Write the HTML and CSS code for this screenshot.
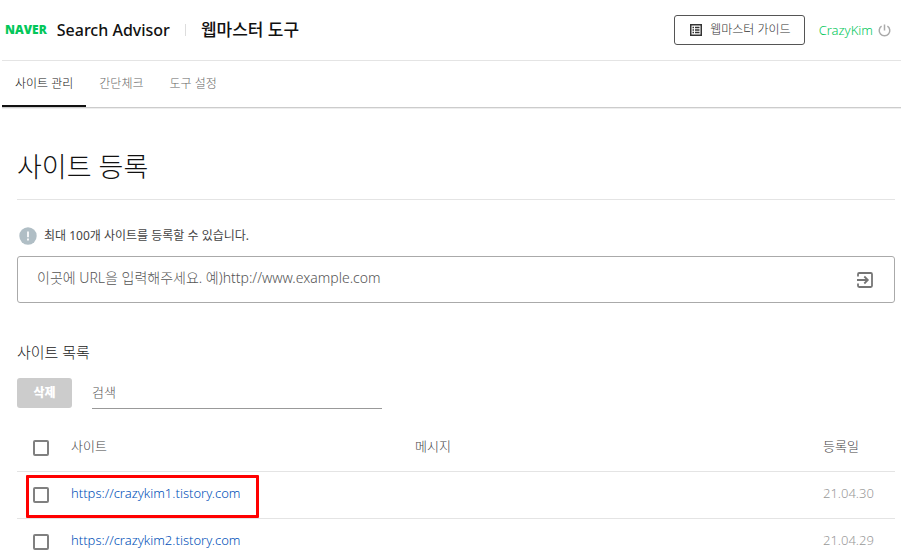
FILE: index.html
```html
<!DOCTYPE html>
<html lang="ko">
<head>
<meta charset="utf-8">
<meta name="viewport" content="width=device-width, initial-scale=1">
<title>Search Advisor</title>
<link rel="stylesheet" href="styles.css">
</head>
<body>
<div class="page">
  <header class="header">
    <a class="naver" href="#">NAVER</a>
    <a class="brand" href="#">Search Advisor</a>
    <span class="divider"></span>
    <a class="tool" href="#">웹마스터 도구</a>
    <button class="guide" type="button">
      <svg class="guide-icon" viewBox="0 0 12 12" aria-hidden="true"><rect x=".75" y=".75" width="10.5" height="10.5" fill="none" stroke="#333" stroke-width="1.5"/><path d="M2.5 3.5H4M5 3.5h4.5M2.5 6H4M5 6h4.5M2.5 8.5H4M5 8.5h4.5" stroke="#333" stroke-width="1.3"/></svg>
      웹마스터 가이드
    </button>
    <a class="user" href="#">CrazyKim</a>
    <button class="power" type="button" aria-label="로그아웃">
      <svg viewBox="0 0 13 13"><path d="M6.5 .5v6M3.6 2.1a5.3 5.3 0 1 0 5.8 0" fill="none" stroke="#aaa" stroke-width="1.5"/></svg>
    </button>
  </header>
  <nav class="tabs">
    <a class="tab active" href="#">사이트 관리</a>
    <a class="tab" href="#">간단체크</a>
    <a class="tab" href="#">도구 설정</a>
  </nav>
  <main class="main">
    <h1>사이트 등록</h1>
    <p class="notice">
      <svg class="notice-icon" viewBox="0 0 18 18" aria-hidden="true"><circle cx="9" cy="9" r="8.7" fill="#b0bec5"/><path d="M9 4.5v5.7M9 11.5v2" stroke="#fff" stroke-width="1.7"/></svg>
      최대 100개 사이트를 등록할 수 있습니다.
    </p>
    <form class="url-box">
      <input class="url" type="text" aria-label="사이트 URL" placeholder="이곳에 URL을 입력해주세요. 예)http://www.example.com">
      <button class="enter" type="submit" aria-label="등록">
        <svg viewBox="0 0 16 16"><path d="M1 4.5V2.2Q1 1 2.2 1h11.6Q15 1 15 2.2v11.6q0 1.2-1.2 1.2H2.2Q1 15 1 13.8V11.5M0 8h10.5M7.3 4.5 10.8 8l-3.5 3.5" fill="none" stroke="#757575" stroke-width="1.8"/></svg>
      </button>
    </form>
    <h2>사이트 목록</h2>
    <div class="actions">
      <button class="delete" type="button" disabled>삭제</button>
      <input class="search" type="text" aria-label="검색" placeholder="검색">
    </div>
    <table class="sites">
      <thead>
        <tr><th class="check"><input type="checkbox" aria-label="전체 선택"></th><th class="site">사이트</th><th>메시지</th><th class="date">등록일</th></tr>
      </thead>
      <tbody>
        <tr class="marked"><td class="check"><input type="checkbox" aria-label="crazykim1 선택"></td><td><a href="#">https://crazykim1.tistory.com</a></td><td></td><td class="date">21.04.30</td></tr>
        <tr><td class="check"><input type="checkbox" aria-label="crazykim2 선택"></td><td><a href="#">https://crazykim2.tistory.com</a></td><td></td><td class="date">21.04.29</td></tr>
      </tbody>
    </table>
  </main>
</div>
</body>
</html>
```
FILE: styles.css
```css
*, *::after { box-sizing: border-box; }
body {
  margin: 0;
  background: #fff;
  color: #333;
  font: 300 12px/18px "Noto Sans", "Noto Sans CJK KR", sans-serif;
}
a { color: inherit; text-decoration: none; }
button, input { font: inherit; color: inherit; margin: 0; }
button { padding: 0; border: 0; background: none; }
svg { display: block; }
.page { max-height: 100vh; overflow: hidden; padding-left: 2px; }

.header {
  display: flex;
  align-items: center;
  height: 61px;
  padding: 0 10px 0 3px;
  border-bottom: 1px solid #e4e4e4;
}
.naver { font: 800 12px/18px "Open Sans", sans-serif; color: #03c75a; margin-right: 10px; }
.brand { font-size: 16px; font-weight: 500; color: #111; }
.divider { width: 1px; height: 12px; margin: 0 15px; background: #ddd; }
.tool { font-size: 17px; font-weight: 500; color: #111; }
.guide {
  display: flex;
  align-items: center;
  gap: 8px;
  height: 30px;
  margin-left: auto;
  padding: 0 13px 0 15px;
  border: 1px solid #555;
  border-radius: 3px;
}
.guide-icon { width: 12px; height: 12px; }
.user { margin-left: 14px; font-size: 13px; line-height: 20px; font-weight: 300; color: #03c75a; }
.power { width: 13px; height: 13px; margin-left: 5px; }

.tabs {
  display: flex;
  height: 47px;
  border-bottom: 1px solid #ccc;
  box-shadow: 0 1px 0 #eee;
}
.tab { padding: 14px 13px; line-height: 18px; color: #666; }
.tab.active { color: #111; border-bottom: 2px solid #111; }

.main { padding: 41px 6px 0 15px; }
h1 {
  margin: 0;
  padding-bottom: 14px;
  border-bottom: 1px solid #e4e4e4;
  font-size: 27px;
  line-height: 36px;
  font-weight: 300;
  color: #111;
}
.notice { display: flex; align-items: center; gap: 7px; margin: 27px 0 11px 2px; font-weight: 400; color: #444; }
.notice-icon { width: 18px; height: 18px; }
.url-box {
  display: flex;
  align-items: center;
  height: 47px;
  padding: 0 21px 0 19px;
  border: 1px solid #aaa;
  border-radius: 3px;
}
.url { flex: 1; border: 0; padding: 0 0 4px; outline: 0; font-size: 14px; }
.enter { width: 16px; height: 16px; }
::placeholder { color: #555; opacity: 1; }
h2 { margin: 39px 0 16px; font-size: 15px; line-height: 20px; font-weight: 300; color: #222; }
.actions { display: flex; align-items: flex-start; gap: 20px; }
.delete { width: 55px; height: 30px; border-radius: 3px; background: #ccc; color: #fff; font-weight: 900; }
.search { width: 33%; height: 31px; padding: 0 0 2px; border: 0; border-bottom: 1px solid #999; outline: 0; font-size: 13px; }

.sites { width: 100%; margin-top: 16px; border-collapse: collapse; table-layout: fixed; font-size: 13px; }
.sites th, .sites td { height: 47px; padding: 0 0 4px; border-bottom: 1px solid #e4e4e4; text-align: left; font-weight: 300; }
.sites th { height: 46px; color: #444; }
.sites .check { width: 54px; padding: 0 0 0 16px; }
.sites .site { width: 344px; }
.sites .date { width: 72px; }
.sites td.date { color: #999; }
.sites a { color: #0050b8; }
.sites input {
  appearance: none;
  display: block;
  width: 16px;
  height: 16px;
  border: 2px solid #808080;
  border-radius: 2px;
}
.marked .check { position: relative; }
.marked .check::after {
  content: "";
  position: absolute;
  left: 9px;
  top: 3px;
  width: 233px;
  height: 43px;
  border: 3px solid #f00;
  border-radius: 1px;
  pointer-events: none;
}
```
